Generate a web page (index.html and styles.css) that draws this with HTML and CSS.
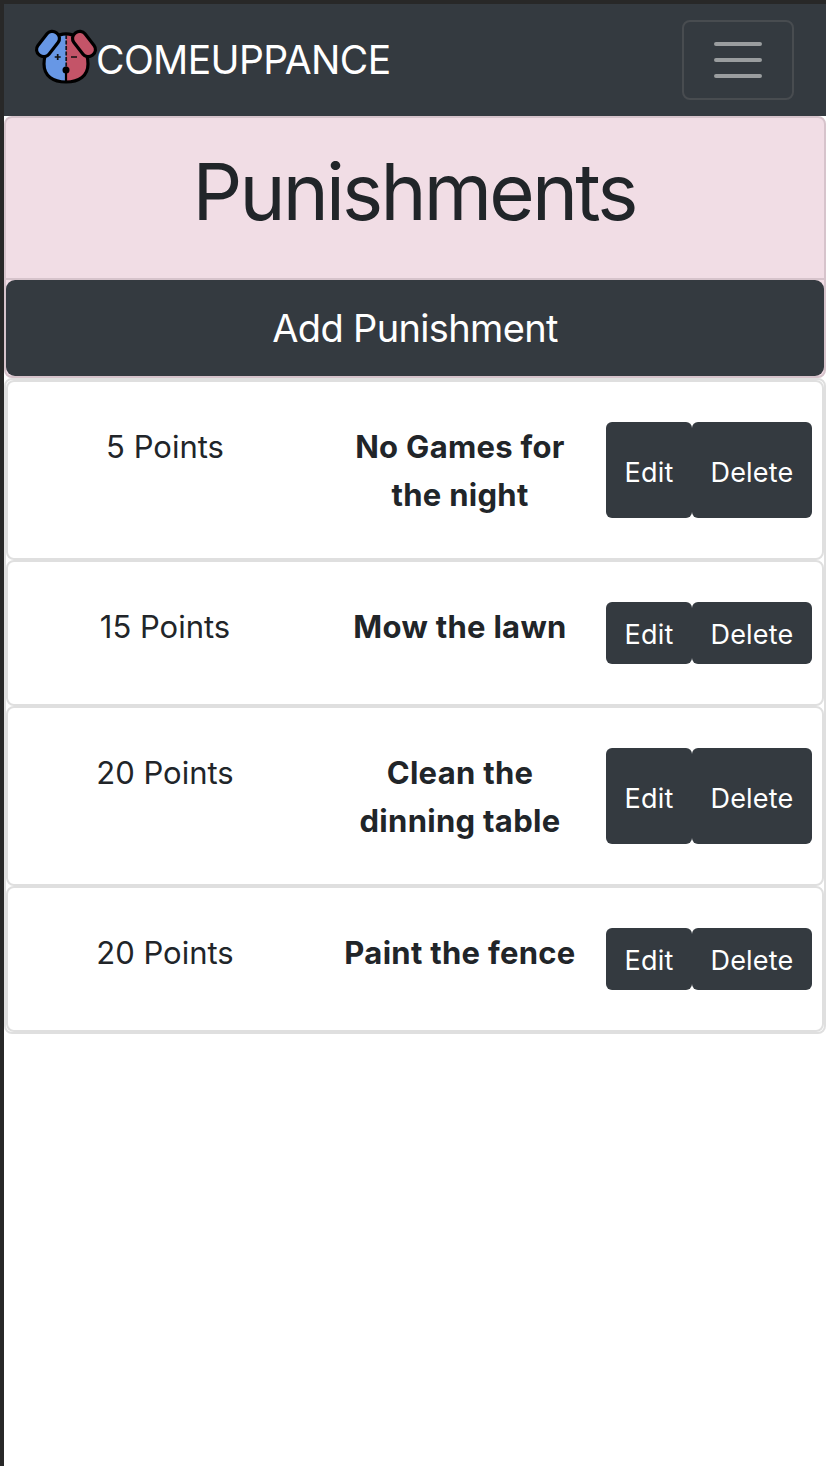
FILE: index.html
```
<!DOCTYPE html>
<html lang="en">
<head>
<meta charset="utf-8">
<title>Comeuppance</title>
<link rel="stylesheet" href="styles.css">
</head>
<body>
<nav class="navbar">
  <a class="brand">
    <svg class="logo" width="60" height="60" viewBox="0 0 60 60">
      <path d="M30 3.800C20 3.800 16 10 13 17Q8 25 8 34C8 46 17 52 30 52Z" fill="#6797e5"/>
      <path d="M30 3.800C40 3.800 44 10 47 17Q52 25 52 34C52 46 43 52 30 52Z" fill="#c45468"/>
      <path d="M30 3.800C20 3.800 16 10 13 17Q8 25 8 34C8 46 17 52 30 52S52 46 52 34Q52 25 47 17C44 10 40 3.800 30 3.800Z" fill="none" stroke="#000" stroke-width="3.200"/>
      <rect x="5" y="0" width="14" height="28" rx="6.600" transform="rotate(38 12 14)" fill="#6797e5" stroke="#000" stroke-width="3.200"/>
      <rect x="41" y="0" width="14" height="28" rx="6.600" transform="rotate(-38 48 14)" fill="#c45468" stroke="#000" stroke-width="3.200"/>
      <path d="M30.200 5V37" stroke="#17151b" stroke-width="1.700" stroke-dasharray="4 1.500"/>
      <path d="M30 40V52" stroke="#000" stroke-width="2.200"/>
      <circle cx="30" cy="40" r="3.500"/>
      <path d="M18.700 27H24.700M21.700 24V30M35 27H41" stroke="#111" stroke-width="1.700"/>
    </svg>
    <span class="brand-name">COMEUPPANCE</span>
  </a>
  <button class="toggler" aria-label="Toggle navigation">
    <svg width="60" height="60" viewBox="0 0 30 30"><path d="M4 7h22M4 15h22M4 23h22" stroke="#9a9d9f" stroke-width="2" stroke-linecap="round"/></svg>
  </button>
</nav>
<header class="card card-pink">
  <div class="card-header"><h1>Punishments</h1></div>
  <button class="add">Add Punishment</button>
</header>
<main class="card">
  <section class="item">
    <div class="points">5 Points</div>
    <div class="title">No Games for<br>the night</div>
    <div class="actions"><button class="btn edit">Edit</button><button class="btn delete">Delete</button></div>
  </section>
  <section class="item single">
    <div class="points">15 Points</div>
    <div class="title">Mow the lawn</div>
    <div class="actions"><button class="btn edit">Edit</button><button class="btn delete">Delete</button></div>
  </section>
  <section class="item">
    <div class="points">20 Points</div>
    <div class="title">Clean the<br>dinning table</div>
    <div class="actions"><button class="btn edit">Edit</button><button class="btn delete">Delete</button></div>
  </section>
  <section class="item single">
    <div class="points">20 Points</div>
    <div class="title">Paint the fence</div>
    <div class="actions"><button class="btn edit">Edit</button><button class="btn delete">Delete</button></div>
  </section>
</main>
</body>
</html>
```

FILE: styles.css
```
* { box-sizing: border-box; }
body {
  margin: 0;
  min-height: 1466px;
  border: solid #282828;
  border-width: 4px 0 0 4px;
  background: #fff;
  color: #212529;
  font-family: Inter, "Liberation Sans", sans-serif;
  font-size: 31px;
  line-height: 48px;
}
button { margin: 0; font-family: inherit; color: #fff; background: #343a40; border: 0; }
.navbar {
  height: 112px;
  padding: 0 32px;
  display: flex;
  align-items: center;
  justify-content: space-between;
  background: #343a40;
}
.brand { display: flex; align-items: center; color: #fff; }
.logo { display: block; overflow: visible; }
.brand-name { font-size: 39px; letter-spacing: -0.6px; }
.toggler {
  width: 112px;
  height: 80px;
  padding: 0;
  display: grid;
  place-items: center;
  background: none;
  border: 2px solid #484c50;
  border-radius: 8px;
}
.toggler svg { display: block; }
.card { border: 2px solid #dfdfdf; border-radius: 8px; }
.card-pink { background: #f1dde5; border-color: #d6c3cb; }
.card-header { height: 162px; padding-top: 26px; border-bottom: 2px solid #d6c3cb; }
h1 {
  margin: 0;
  font-size: 78px;
  font-weight: 400;
  line-height: 96px;
  letter-spacing: -2.8px;
  text-indent: -2px;
  text-align: center;
}
.add {
  display: block;
  width: 100%;
  height: 96px;
  border-radius: 9px;
  font-size: 38px;
  letter-spacing: -0.65px;
}
.item {
  display: grid;
  grid-template-columns: 314px 276px 206px;
  padding: 40px 0;
  border: 2px solid #dfdfdf;
  border-radius: 8px;
}
.points, .title { text-align: center; padding-top: 1px; margin-bottom: -1px; }
.title { font-weight: 700; letter-spacing: 0.3px; }
.actions { display: flex; margin-left: 8px; margin-right: -8px; min-height: 62px; }
.btn { padding: 4px 0 0; font-size: 27px; letter-spacing: 0.2px; border-radius: 6px; }
.single .btn { padding-top: 2px; }
.edit { width: 86px; }
.delete { width: 120px; }
```
